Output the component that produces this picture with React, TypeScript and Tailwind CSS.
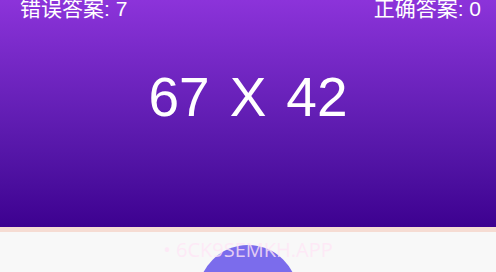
import React from 'react'

export default function App() {
  return (
    <div className="w-[496px] h-[272px] overflow-hidden bg-[#f8f8f8] relative" style={{ fontFamily: '"Liberation Sans", "Noto Sans CJK SC", sans-serif' }}>
      <div className="h-[227px] bg-gradient-to-b from-[#8c33da] to-[#3d0190] text-white flex flex-col">
        <div className="flex justify-between pl-[20px] pr-[15px] mt-[-5px] text-[21px] leading-[28px]">
          <span>错误答案: 7</span>
          <span>正确答案: 0</span>
        </div>
        <div className="flex justify-center gap-[20px] mt-[42px] text-[55px] leading-[64px]">
          <span>67</span>
          <span>X</span>
          <span>42</span>
        </div>
      </div>
      <div className="h-[5px] bg-[#f6dcd3]" />
      <div className="flex justify-center relative">
        <div className="mt-[13px] w-[100px] h-[100px] rounded-full bg-[#7b6cec]" />
        <div className="absolute top-[5px] left-0 right-0 flex justify-center text-[20px] leading-[26px] text-[#ffe6f6]/80" style={{ fontFamily: '"Open Sans", sans-serif' }}>
          <span>• 6CK9SEMKH.APP</span>
        </div>
      </div>
    </div>
  )
}
